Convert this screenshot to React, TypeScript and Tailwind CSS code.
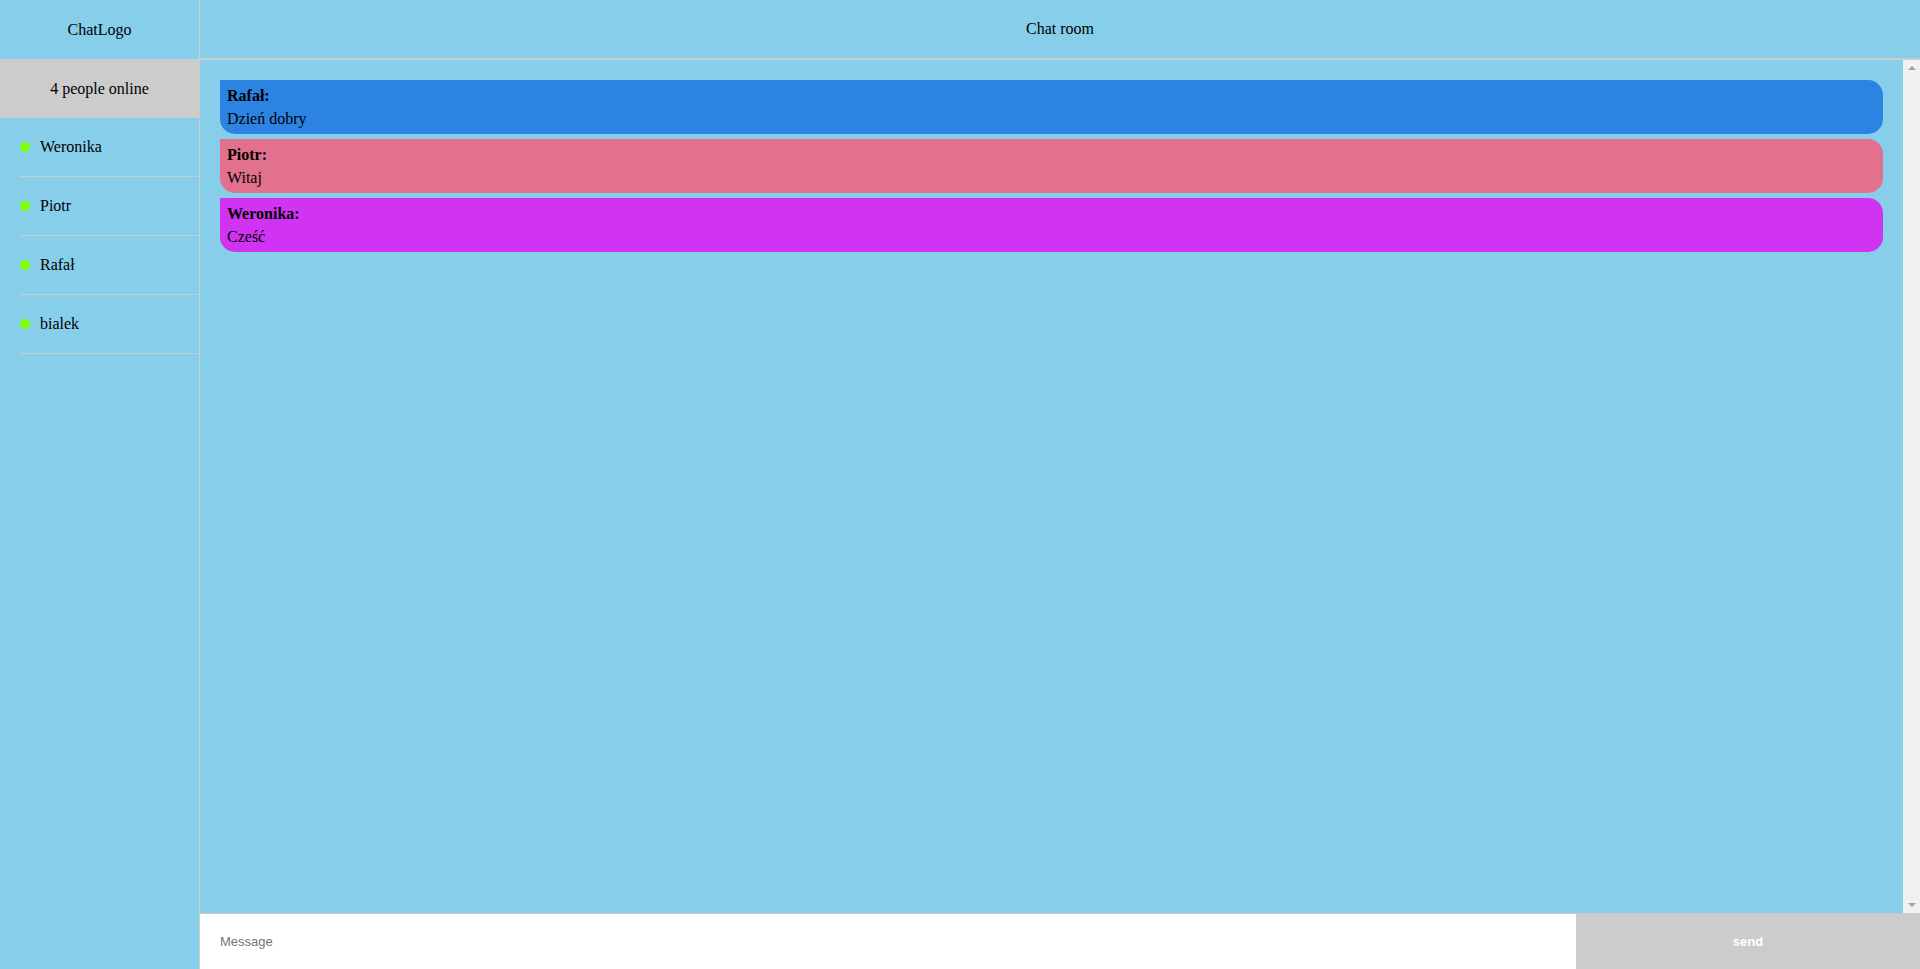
import React from "react";

const users = ["Weronika", "Piotr", "Rafał", "bialek"];

const messages = [
  { author: "Rafał", text: "Dzień dobry", color: "bg-[#2c83e2]" },
  { author: "Piotr", text: "Witaj", color: "bg-[#e1718c]" },
  { author: "Weronika", text: "Cześć", color: "bg-[#d033f2]" },
];

const App: React.FC = () => {
  return (
    <div className="h-screen flex bg-[#87ceeb] text-black text-base font-['Liberation_Serif',serif]">
      <div className="w-[200px] shrink-0 border-r border-[#ccc] flex flex-col">
        <div className="h-[59px] flex items-center justify-center">ChatLogo</div>
        <div className="h-[59px] flex items-center justify-center bg-[#ccc]">4 people online</div>
        {users.map((u) => (
          <div key={u} className="ml-5 h-[59px] border-b border-[#ccc] flex items-center gap-2.5">
            <span className="w-2.5 h-2.5 rounded-full bg-[#7fff00]" />
            <span>{u}</span>
          </div>
        ))}
      </div>
      <div className="flex-1 flex flex-col min-w-0">
        <div className="h-[60px] shrink-0 border-b-2 border-[#ccc] flex items-center justify-center">Chat room</div>
        <div className="flex-1 flex min-h-0">
          <div className="flex-1 overflow-hidden px-5 pt-5">
            {messages.map((m) => (
              <div key={m.author} className={`${m.color} rounded-tr-[15px] rounded-br-[15px] rounded-bl-[15px] px-[7px] py-1 leading-[23px] mb-[5px]`}>
                <div className="font-bold">{m.author}:</div>
                <div>{m.text}</div>
              </div>
            ))}
          </div>
          {/* fake classic scrollbar */}
          <div className="w-[17px] shrink-0 bg-[#f1f1f1] flex flex-col justify-between items-center py-[6px]">
            <span className="w-0 h-0 border-x-[4px] border-x-transparent border-b-[4px] border-b-[#a3a3a3]" />
            <span className="w-0 h-0 border-x-[4px] border-x-transparent border-t-[4px] border-t-[#a3a3a3]" />
          </div>
        </div>
        <div className="h-[56px] shrink-0 border-t border-[#ccc] flex font-['Liberation_Sans',Arial,sans-serif] text-[13px]">
          <input
            className="flex-1 bg-white px-5 outline-none placeholder:text-[#757575]"
            placeholder="Message"
          />
          <button className="w-[344px] bg-[#ccc] text-white font-bold">send</button>
        </div>
      </div>
    </div>
  );
};

export default App;
